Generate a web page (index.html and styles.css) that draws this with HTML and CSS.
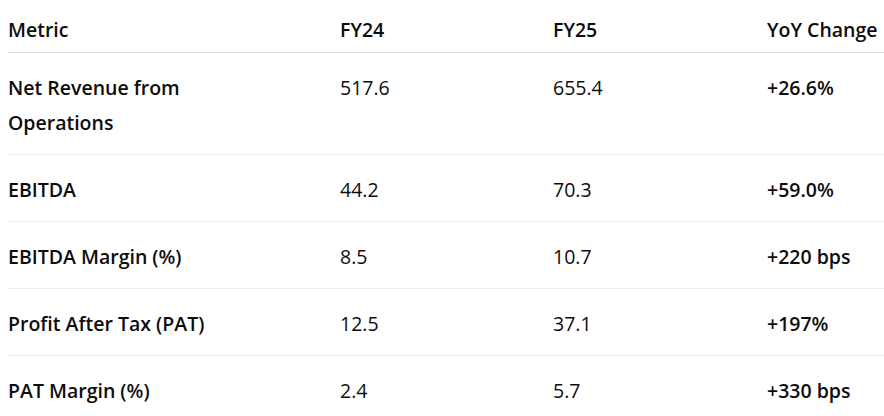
FILE: index.html
```html
<!DOCTYPE html>
<html>
<head>
<meta charset="utf-8">
<link rel="stylesheet" href="styles.css">
</head>
<body>
<table class="metrics">
  <colgroup>
    <col class="c1"><col class="c2"><col class="c3"><col class="c4">
  </colgroup>
  <thead>
    <tr><th>Metric</th><th>FY24</th><th>FY25</th><th>YoY Change</th></tr>
  </thead>
  <tbody>
    <tr><td class="name">Net Revenue from<br>Operations</td><td>517.6</td><td>655.4</td><td class="chg">+26.6%</td></tr>
    <tr><td class="name">EBITDA</td><td>44.2</td><td>70.3</td><td class="chg">+59.0%</td></tr>
    <tr><td class="name">EBITDA Margin (%)</td><td>8.5</td><td>10.7</td><td class="chg">+220 bps</td></tr>
    <tr><td class="name">Profit After Tax (PAT)</td><td>12.5</td><td>37.1</td><td class="chg">+197%</td></tr>
    <tr><td class="name">PAT Margin (%)</td><td>2.4</td><td>5.7</td><td class="chg">+330 bps</td></tr>
  </tbody>
</table>
</body>
</html>
```
FILE: styles.css
```css
html, body {
  margin: 0;
  padding: 0;
  background: #ffffff;
}
body {
  padding-left: 8px;
  font-family: "Open Sans", "Noto Sans", sans-serif;
  font-size: 19.5px;
  color: #0d0d0d;
}
.metrics {
  border-collapse: collapse;
  width: 876px;
  table-layout: fixed;
}
.c1 { width: 332px; }
.c2 { width: 213px; }
.c3 { width: 214px; }
.c4 { width: 117px; }
.metrics th {
  text-align: left;
  font-weight: 600;
  line-height: 36px;
  padding: 12px 0 4px 0;
  border-bottom: 1px solid #d9d9d9;
  white-space: nowrap;
}
.metrics td {
  line-height: 35px;
  padding: 17px 0 14px 0;
  vertical-align: top;
  border-bottom: 1px solid #ececec;
  font-weight: 400;
  white-space: nowrap;
}
.metrics td.name,
.metrics td.chg {
  font-weight: 600;
}
```
